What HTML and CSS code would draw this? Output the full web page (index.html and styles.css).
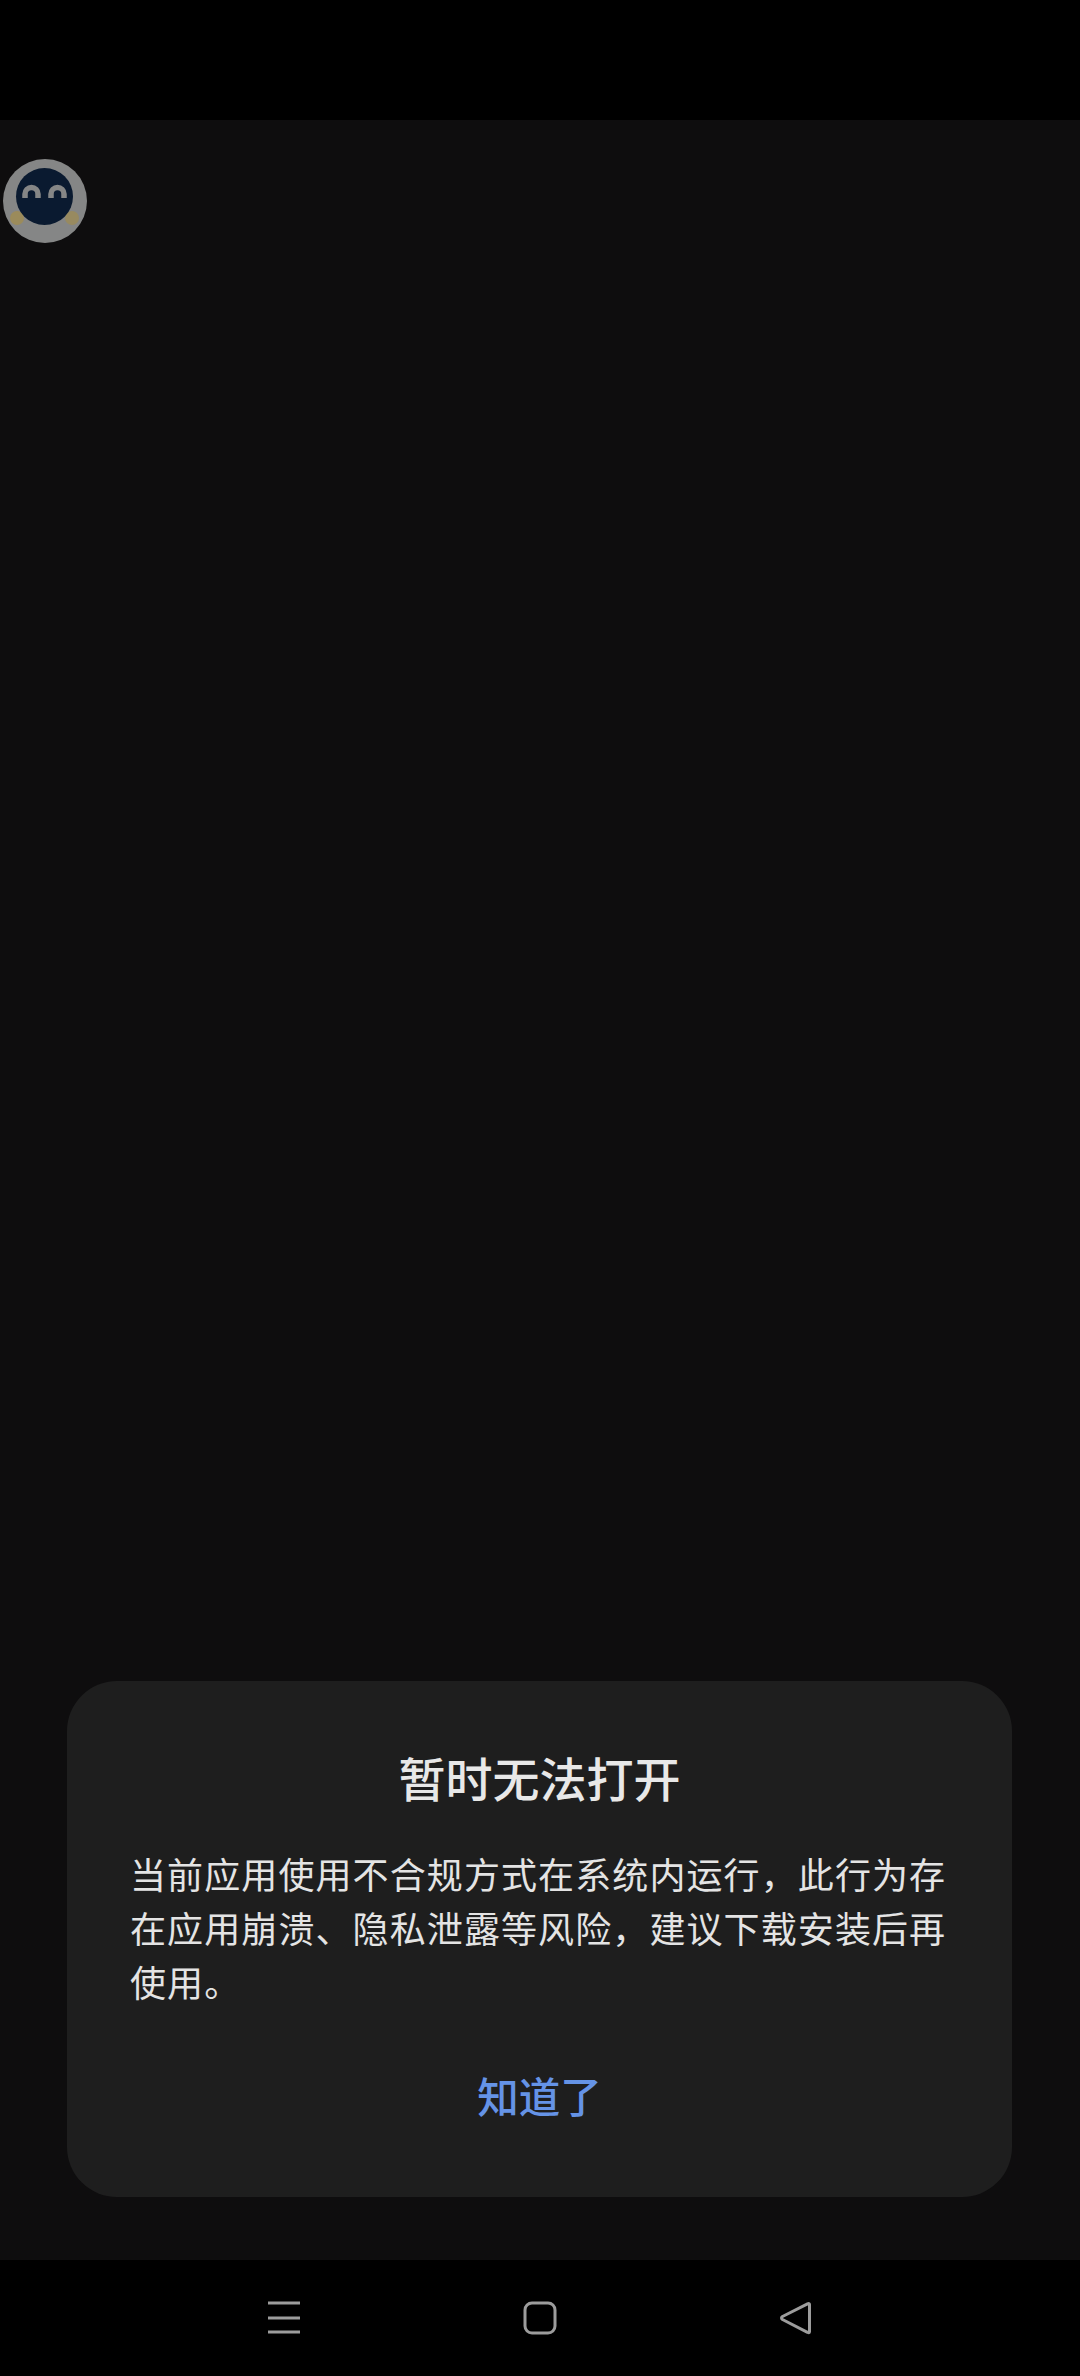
FILE: index.html
```html
<!DOCTYPE html>
<html lang="zh">
<head>
  <meta charset="utf-8">
  <meta name="viewport" content="width=device-width, initial-scale=1">
  <title>暂时无法打开</title>
  <link rel="stylesheet" href="styles.css">
</head>
<body>
  <div class="status-bar"></div>
  <main class="content">
    <svg class="float-ball" width="90" height="90" viewBox="0 0 90 90">
      <circle cx="45" cy="45" r="42" fill="#858686"/>
      <circle cx="17" cy="62" r="7" fill="#a08c50" opacity="0.8"/>
      <circle cx="72" cy="62" r="7" fill="#a08c50" opacity="0.7"/>
      <circle cx="44.500" cy="40.500" r="28.500" fill="#0a1a30"/>
      <path d="M25 42v-4a6.500 6.500 0 0 1 13 0v4M51 42v-4a6.500 6.500 0 0 1 13 0v4" fill="none" stroke="#858686" stroke-width="5.500"/>
    </svg>
    <div class="dialog">
      <h1 class="dialog-title">暂时无法打开</h1>
      <p class="dialog-text">当前应用使用不合规方式在系统内运行，此行为存在应用崩溃、隐私泄露等风险，建议下载安装后再使用。</p>
      <div class="dialog-btn">知道了</div>
    </div>
  </main>
  <nav class="nav-bar">
    <svg class="nav-icon" width="34" height="34" viewBox="0 0 34 34">
      <path d="M1 2h32M1 17h32M1 31h32" stroke="#9c9c9c" stroke-width="3" fill="none"/>
    </svg>
    <svg class="nav-icon" width="34" height="34" viewBox="0 0 34 34">
      <rect x="2" y="2" width="30" height="30" rx="7" stroke="#9c9c9c" stroke-width="3" fill="none"/>
    </svg>
    <svg class="nav-icon" width="34" height="34" viewBox="0 0 34 34">
      <path d="M30.500 3.500v27q0 2-2 .8L3.500 18.500q-2-1.500 0-3l25-12.600q2-.9 2 .6z" stroke="#9c9c9c" stroke-width="3" stroke-linejoin="round" fill="none"/>
    </svg>
  </nav>
</body>
</html>
```

FILE: styles.css
```css
* {
  margin: 0;
  padding: 0;
  box-sizing: border-box;
}
body {
  width: 1080px;
  height: 2376px;
  display: flex;
  flex-direction: column;
  background: #000;
  font-family: "Noto Sans CJK SC", "Noto Sans", sans-serif;
  overflow: hidden;
}
.status-bar {
  height: 120px;
  background: #000;
}
.content {
  position: relative;
  flex: 1;
  display: flex;
  flex-direction: column;
  justify-content: flex-end;
  padding: 0 68px 63px 67px;
  background: #0e0d0e;
}
.float-ball {
  position: absolute;
  left: 0;
  top: 36px;
}
.dialog {
  background: #1e1e1e;
  border-radius: 50px;
  padding: 66px 63px 0;
  height: 516px;
}
.dialog-title {
  font-size: 47px;
  font-weight: 500;
  line-height: 60px;
  color: #e8e8e8;
  text-align: center;
}
.dialog-text {
  margin-top: 39px;
  font-size: 36px;
  letter-spacing: 1.100px;
  line-height: 54px;
  color: #e4e4e4;
}
.dialog-btn {
  margin-top: 59px;
  font-size: 41.500px;
  line-height: 56px;
  font-weight: 500;
  color: #6593e6;
  text-align: center;
}
.nav-bar {
  height: 116px;
  display: flex;
  align-items: center;
  justify-content: center;
  gap: 222px;
  background: #000;
}
.nav-icon {
  display: block;
}
```
